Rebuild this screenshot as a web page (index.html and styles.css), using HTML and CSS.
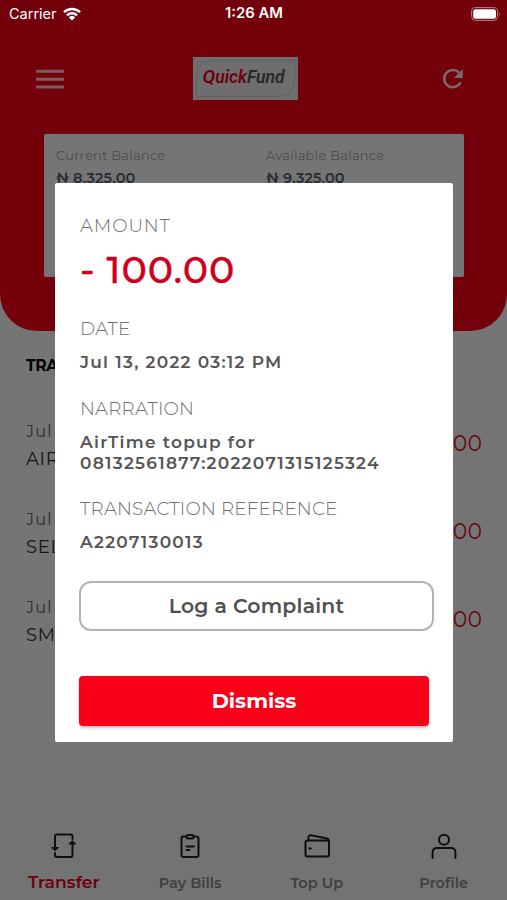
FILE: index.html
```html
<!DOCTYPE html>
<html lang="en">
<head>
<meta charset="utf-8">
<title>QuickFund</title>
<link rel="stylesheet" href="styles.css">
</head>
<body>
<div class="phone">
  <header class="header">
    <div class="toolbar">
      <svg class="menu" viewBox="0 0 28 20"><path d="M0 2.300h28M0 10.200h28M0 17.900h28" stroke="#fff" stroke-width="3"/></svg>
      <div class="logo"><div class="logo-frame"><span class="logo-red"><b>Q</b>uick</span><span>Fund</span></div></div>
      <svg class="refresh" viewBox="0 0 22 22"><path d="M18.6 14.2A8.6 8.6 0 1 1 17.2 4.8" fill="none" stroke="#fff" stroke-width="2.6"/><path d="M20.8 1v9h-9z" fill="#fff"/></svg>
    </div>
    <section class="balances">
      <div class="balance"><div class="balance-label">Current Balance</div><div class="balance-value">₦ 8,325.00</div></div>
      <div class="balance"><div class="balance-label">Available Balance</div><div class="balance-value">₦ 9,325.00</div></div>
    </section>
  </header>
  <main class="history">
    <h2 class="history-title">TRA</h2>
    <div class="row"><div><div class="row-date">Jul</div><div class="row-name">AIR</div></div><div class="row-amount">00</div></div>
    <div class="row"><div><div class="row-date">Jul</div><div class="row-name">SEL</div></div><div class="row-amount">00</div></div>
    <div class="row"><div><div class="row-date">Jul</div><div class="row-name">SM</div></div><div class="row-amount">00</div></div>
  </main>
  <nav class="tabs">
    <div class="tab active">
      <svg viewBox="0 0 28 28"><path d="M5 13V4.500a2 2 0 0 1 2-2h13.500a2 2 0 0 1 2 2V7M22.500 10v13a2 2 0 0 1-2 2H7a2 2 0 0 1-2-2v-2M5 12v4"/><path class="solid" d="M2 15.500h6.500L5.200 18.500zM19.200 12h6.500L22.500 9z"/></svg>
      <span>Transfer</span>
    </div>
    <div class="tab">
      <svg viewBox="0 0 28 28"><path d="M10.500 4.500H7.500a2 2 0 0 0-2 2V23a2 2 0 0 0 2 2h13a2 2 0 0 0 2-2V6.500a2 2 0 0 0-2-2h-3"/><rect x="10.500" y="3" width="7" height="3.500" rx="1.500"/><path d="M10.500 14.500h7.500M10.500 18h3"/></svg>
      <span>Pay Bills</span>
    </div>
    <div class="tab">
      <svg viewBox="0 0 28 28"><rect x="2.500" y="8.500" width="23.500" height="16" rx="2"/><path d="M5.500 8.500V5.200a2 2 0 0 1 2.400-1.900L24 6.500q2 .4 2 3"/><circle class="solid" cx="7" cy="16.500" r="1"/></svg>
      <span>Top Up</span>
    </div>
    <div class="tab">
      <svg viewBox="0 0 28 28"><circle cx="14" cy="7.700" r="5"/><path d="M2.600 26v-6a4 4 0 0 1 4-4h14.800a4 4 0 0 1 4 4v6"/></svg>
      <span>Profile</span>
    </div>
  </nav>
  <div class="overlay">
    <section class="dialog">
      <div class="label l-amount">AMOUNT</div>
      <div class="amount">- 100.00</div>
      <div class="label">DATE</div>
      <div class="value v-date">Jul 13, 2022 03:12 PM</div>
      <div class="label l-narration">NARRATION</div>
      <div class="value">AirTime topup for<br>08132561877:2022071315125324</div>
      <div class="label l-ref">TRANSACTION REFERENCE</div>
      <div class="value">A2207130013</div>
      <button class="complaint">Log a Complaint</button>
      <button class="dismiss">Dismiss</button>
    </section>
  </div>
  <div class="status">
    <div class="carrier"><span>Carrier</span><svg viewBox="0 0 18 14"><path d="M1 5.200a11.500 11.500 0 0 1 16 0M3.900 8.300a7.400 7.400 0 0 1 10.200 0" fill="none" stroke="#fff" stroke-width="2.400"/><path d="M9 13.600 5.700 10.300a4.800 4.800 0 0 1 6.600 0z" fill="#fff"/></svg></div>
    <div class="clock">1:26 AM</div>
    <svg class="battery" viewBox="0 0 30 14"><rect x=".6" y=".6" width="26" height="12.800" rx="4" fill="none" stroke="#b9838a" stroke-width="1"/><rect x="2.200" y="2.200" width="22.800" height="9.600" rx="2.500" fill="#fff"/><path d="M28 4.800q1.800 2.200 0 4.400z" fill="#b9838a"/></svg>
  </div>
</div>
</body>
</html>
```

FILE: styles.css
```css
* { box-sizing: border-box; margin: 0; padding: 0; }
body { font-family: Montserrat, Inter, sans-serif; }
.phone { position: relative; width: 507px; height: 900px; overflow: hidden; background: #fff; display: flex; flex-direction: column; white-space: nowrap; }
.header { height: 331px; background: #fa0018; border-radius: 0 0 37px 37px; padding: 57px 43px 0 36px; }
.toolbar { display: flex; justify-content: space-between; height: 43px; }
.menu { width: 28px; height: 20px; margin-top: 12px; opacity: .8; }
.refresh { width: 22px; height: 22px; margin-top: 11px; opacity: .9; }
.logo { width: 105px; height: 43px; background: #f0f0f0; padding: 3px; margin-right: 15px; }
.logo-frame { height: 37px; padding-right: 4px; border: 1px solid #cfcfcf; border-radius: 16px 0 16px 0; font: italic 600 17.500px/32px Roboto, sans-serif; letter-spacing: 0; color: #555; text-align: center; }
.logo-red { color: #f0001c; }
.logo-red b { font-size: 19px; font-weight: 600; }
.balances { display: flex; width: 420px; height: 143px; margin: 34px 0 0 8px; padding: 12px 0 12px 12px; background: #fff; border-radius: 2px; }
.balance { flex: 0 0 210px; }
.balance:last-child { flex-basis: 198px; }
.balance-label { font-size: 13px; line-height: 18px; color: #a3a6aa; letter-spacing: .25px; }
.balance-value { font-size: 14.500px; font-weight: 600; line-height: 18px; margin-top: 5px; color: #58606e; letter-spacing: .1px; }
.history { flex: 1; padding: 25px 25px 0 26px; }
.history-title { font-size: 15.500px; font-weight: 700; line-height: 20px; color: #000; margin-bottom: 46px; letter-spacing: -.3px; }
.row { display: flex; justify-content: space-between; height: 88px; }
.row-date { font-size: 16px; line-height: 20px; letter-spacing: 1.3px; color: #666; }
.row-name { font-size: 18px; line-height: 20px; margin-top: 7px; color: #333; letter-spacing: .7px; }
.row-amount { font-size: 22px; line-height: 26px; margin-top: 9px; color: #e0102d; }
.tabs { display: flex; height: 76px; padding: 8px 0 0; background: #fafafa; border-radius: 24px 24px 0 0; }
.tab { flex: 1; display: flex; flex-direction: column; align-items: center; font-size: 14.600px; line-height: 20px; font-weight: 600; color: #8c8c8c; }
.tab svg { width: 28px; height: 28px; margin-bottom: 11px; fill: none; stroke: #222; stroke-width: 2; stroke-linecap: round; stroke-linejoin: round; }
.tab .solid { fill: #222; stroke-width: 1; }
.tab span { padding-top: 2px; }
.tab.active { color: #f00025; }
.tab.active svg { margin-left: 2px; }
.tab.active span { padding: 1px 0 0 1px; font-size: 17.200px; }
.overlay { position: absolute; inset: 0; background: rgba(0, 0, 0, .54); padding: 183px 54px 0 55px; }
.dialog { width: 398px; height: 559px; padding: 33px 15px 0 25px; background: #fff; border-radius: 2px; }
.label { font-size: 18.300px; line-height: 20px; font-weight: 300; color: #707070; letter-spacing: .22px; }
.l-amount { letter-spacing: .9px; }
.value { font-size: 17px; line-height: 21px; font-weight: 600; color: #555; letter-spacing: 1.270px; }
.amount { font-size: 38px; font-weight: 500; line-height: 40px; margin: 14px 0 29px; color: #cf001c; letter-spacing: .9px; -webkit-text-stroke: .3px #cf001c; }
.v-date { margin: 13px 0 26px; }
.l-narration { margin-bottom: 13px; }
.l-ref { margin: 25px 0 13px; }
.complaint, .dismiss { display: block; height: 50px; font-family: inherit; }
.complaint { width: 355px; margin: 28px 0 0 -1px; border: 2px solid #b3b3b3; border-radius: 12px; background: #fff; color: #505050; font-size: 20.400px; font-weight: 600; line-height: 46px; letter-spacing: .2px; }
.dismiss { width: 350px; margin: 45px 0 0 -1px; border: 0; border-radius: 4px; background: #fa0018; box-shadow: 0 2px 3px rgba(0, 0, 0, .25); color: #fff; font-size: 20.800px; font-weight: 700; line-height: 50px; }
.status { position: absolute; inset: 0 0 auto; display: flex; align-items: center; justify-content: space-between; height: 27px; padding: 0 6px 0 9px; color: #fff; font: 500 14.800px/27px Inter, sans-serif; }
.carrier { display: flex; align-items: center; gap: 6px; width: 100px; }
.carrier span { font-size: 14.500px; font-weight: 400; }
.carrier svg { width: 18px; height: 14px; }
.clock { font-weight: 600; margin-right: 2px; }
.battery { width: 30px; height: 14px; margin-left: 70px; }
```
